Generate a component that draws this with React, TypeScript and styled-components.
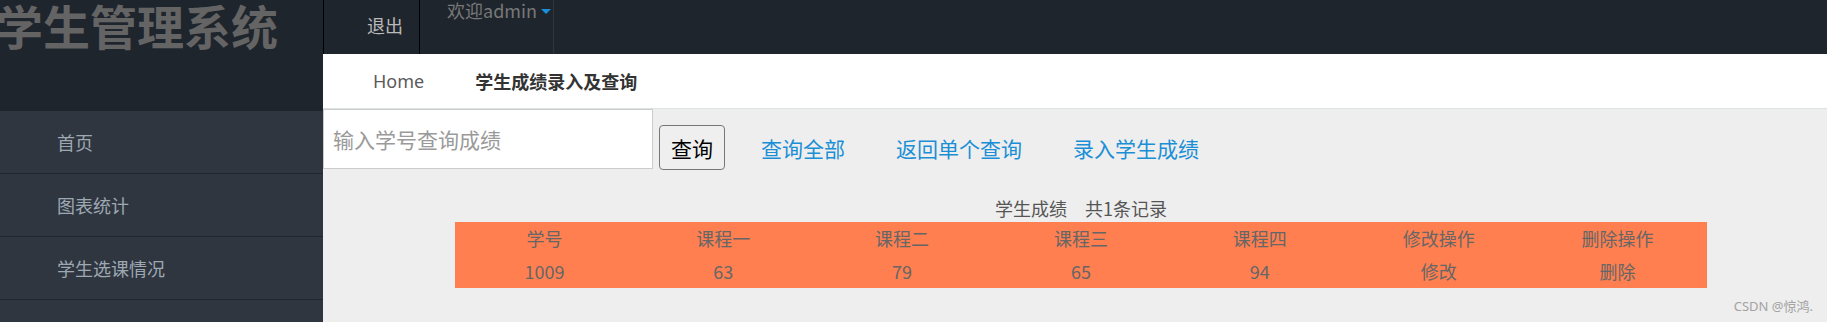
import React from 'react'
import styled, { createGlobalStyle } from 'styled-components'

const GlobalStyle = createGlobalStyle`
    html, body {
        margin: 0;
        padding: 0;
        background: #eeeeee;
        font-family: "Noto Sans", "Noto Sans CJK SC", sans-serif;
        overflow: hidden;
    }
    * { box-sizing: border-box; }
`

const Layout = styled.div`
    display: grid;
    grid-template-columns: 323px 1fr;
    min-height: 100vh;
    position: relative;
`

const Sidebar = styled.aside`
    display: flex;
    flex-direction: column;
    background: #2f363f;
`

const Logo = styled.div`
    height: 111px;
    background: #1f252d;
    overflow: hidden;
`

const Title = styled.h1`
    margin: -2px 0 0 -4px;
    font-family: "Noto Sans CJK SC", sans-serif;
    font-size: 47px;
    font-weight: 700;
    line-height: 54px;
    color: #646464;
    white-space: nowrap;
`

const NavItem = styled.div`
    height: 63px;
    display: flex;
    align-items: center;
    padding-left: 57px;
    border-bottom: 1px solid #20262d;
    font-family: "Noto Sans CJK SC", sans-serif;
    font-size: 18px;
    color: #9ea8b3;
`

const Main = styled.main`
    display: flex;
    flex-direction: column;
`

const Header = styled.header`
    height: 54px;
    display: flex;
    background: #1f252d;
    border-left: 1px solid #000;
    font-family: "Noto Sans CJK SC", sans-serif;
    font-size: 18px;
`

const Logout = styled.div`
    padding: 14px 16px 0 43px;
    line-height: 22px;
    color: #b9b9b9;
    border-right: 1px solid #000;
`

const Welcome = styled.div`
    display: flex;
    align-items: flex-start;
    padding: 0 2px 0 27px;
    line-height: 20px;
    color: #787878;
    border-right: 1px solid #2f353d;
`

const Caret = styled.span`
    width: 0;
    height: 0;
    margin: 9px 0 0 4px;
    border-left: 5.5px solid transparent;
    border-right: 5.5px solid transparent;
    border-top: 5px solid #1a8fd9;
`

const Breadcrumb = styled.nav`
    height: 55px;
    display: flex;
    align-items: center;
    padding-left: 50px;
    background: #fff;
    border-bottom: 1px solid #dde2e2;
    font-size: 18px;
`

const Crumb = styled.span<{ $active?: boolean }>`
    margin-right: 51px;
    font-family: ${p => p.$active ? '"Noto Sans CJK SC", sans-serif' : '"Noto Sans", sans-serif'};
    font-weight: ${p => p.$active ? 700 : 400};
    color: ${p => p.$active ? '#333' : '#5a5a5a'};
`

const Content = styled.section`
    flex: 1;
    background: #eeeeee;
    font-family: "Noto Sans CJK SC", sans-serif;
`

const SearchBar = styled.div`
    display: flex;
    align-items: flex-end;
`

const SearchInput = styled.input`
    width: 330px;
    height: 60px;
    padding: 0 9px;
    border: 1px solid #cccccc;
    background: #fff;
    font-family: "Noto Sans CJK SC", sans-serif;
    font-size: 21px;
    outline: none;
    &::placeholder { color: #9a9a9a; }
`

const Actions = styled.div`
    display: flex;
    align-items: center;
    margin-bottom: -1px;
`

const SearchButton = styled.button`
    width: 66px;
    height: 45px;
    margin-left: 6px;
    padding: 0;
    border: 1px solid #767676;
    border-radius: 4px;
    background: #efefef;
    font-family: "Noto Sans CJK SC", sans-serif;
    font-size: 21px;
    color: #000;
`

const ActionLink = styled.a`
    margin-left: 51px;
    font-size: 21px;
    color: #1b8fd6;
    text-decoration: none;
    &:first-of-type { margin-left: 36px; }
`

const ScoreTable = styled.table`
    width: 1252px;
    margin: 27px 0 0 132px;
    border-collapse: collapse;
    table-layout: fixed;
    font-size: 18px;
    color: #666;
`

const Caption = styled.caption`
    line-height: 24px;
    padding-bottom: 2px;
    color: #555;
`

const Gap = styled.span`
    display: inline-block;
    width: 18px;
`

const Row = styled.tr`
    height: 33px;
    background: #ff7f50;
`

const Cell = styled.td`
    padding: 0;
    text-align: center;
    line-height: 33px;
`

const Watermark = styled.div`
    position: absolute;
    right: 14px;
    top: 296px;
    font-family: "Noto Sans", "Noto Sans CJK SC", sans-serif;
    font-size: 13px;
    color: #a3a3a3;
`

const navItems = ['首页', '图表统计', '学生选课情况']
const columns = ['学号', '课程一', '课程二', '课程三', '课程四', '修改操作', '删除操作']
const scores = ['1009', '63', '79', '65', '94', '修改', '删除']

const App = () => {
    return (
        <>
            <GlobalStyle />
            <Layout>
                <Sidebar>
                    <Logo>
                        <Title>学生管理系统</Title>
                    </Logo>
                    {navItems.map(item => <NavItem key={item}>{item}</NavItem>)}
                </Sidebar>
                <Main>
                    <Header>
                        <Logout>退出</Logout>
                        <Welcome>欢迎admin<Caret /></Welcome>
                    </Header>
                    <Breadcrumb>
                        <Crumb>Home</Crumb>
                        <Crumb $active>学生成绩录入及查询</Crumb>
                    </Breadcrumb>
                    <Content>
                        <SearchBar>
                            <SearchInput placeholder='输入学号查询成绩' />
                            <Actions>
                                <SearchButton>查询</SearchButton>
                                <ActionLink href='#'>查询全部</ActionLink>
                                <ActionLink href='#'>返回单个查询</ActionLink>
                                <ActionLink href='#'>录入学生成绩</ActionLink>
                            </Actions>
                        </SearchBar>
                        <ScoreTable>
                            <Caption>学生成绩<Gap />共1条记录</Caption>
                            <tbody>
                                <Row>{columns.map(c => <Cell key={c}>{c}</Cell>)}</Row>
                                <Row>{scores.map((s, i) => <Cell key={i}>{s}</Cell>)}</Row>
                            </tbody>
                        </ScoreTable>
                    </Content>
                </Main>
                <Watermark>CSDN @惊鸿.</Watermark>
            </Layout>
        </>
    )
}

export default App
